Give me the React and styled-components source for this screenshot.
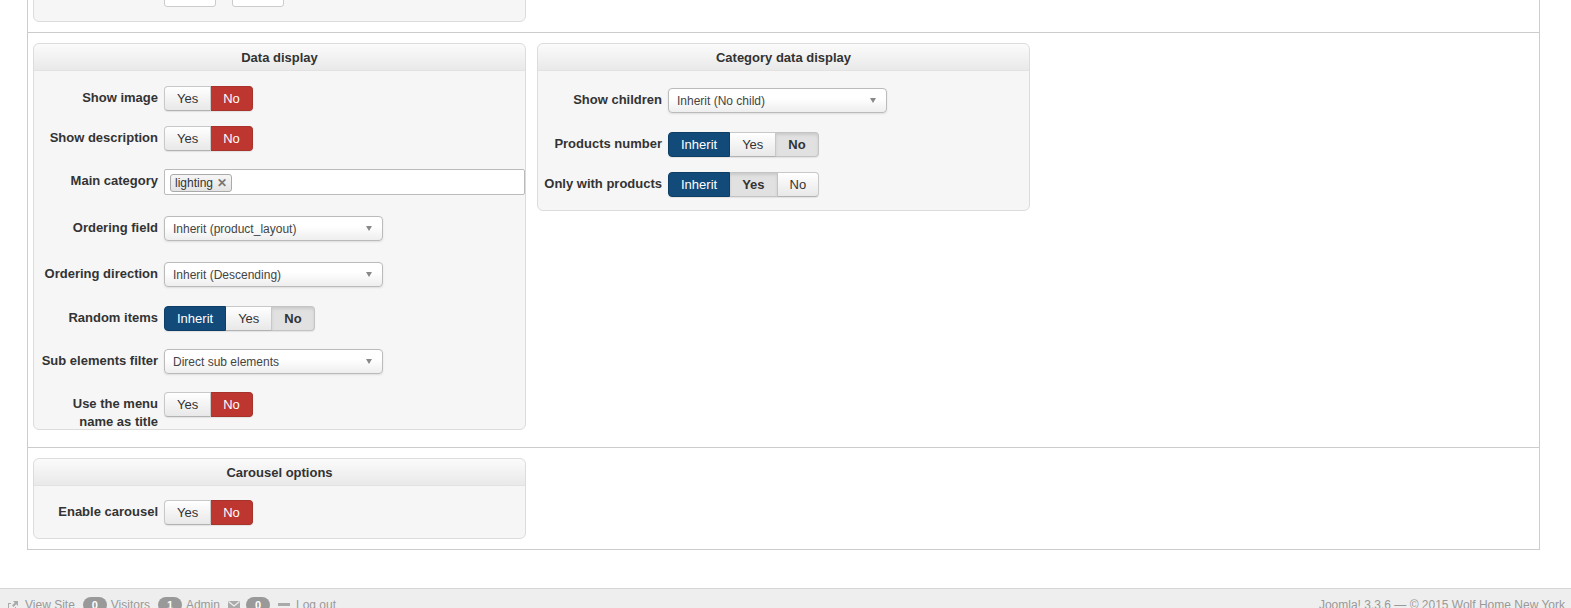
import React from "react";
import styled, { createGlobalStyle, css } from "styled-components";

const GlobalStyle = createGlobalStyle`
  html, body { margin: 0; padding: 0; background: #fff; overflow: hidden; }
  body {
    font-family: "Liberation Sans", Arial, sans-serif;
    font-size: 13px;
    color: #333;
  }
`;

const dataRows = [
  { label: "Show image", type: "toggle", mt: 15, opts: ["Yes", "No"], active: 1, tone: "red" },
  { label: "Show description", type: "toggle", mt: 15, opts: ["Yes", "No"], active: 1, tone: "red" },
  { label: "Main category", type: "tags", mt: 18, tags: ["lighting"] },
  { label: "Ordering field", type: "select", mt: 22, value: "Inherit (product_layout)" },
  { label: "Ordering direction", type: "select", mt: 21, value: "Inherit (Descending)" },
  { label: "Random items", type: "triple", mt: 19, active: 2 },
  { label: "Sub elements filter", type: "select", mt: 18, value: "Direct sub elements" },
  { label: "Use the menu name as title", type: "toggle", mt: 18, opts: ["Yes", "No"], active: 1, tone: "red" },
];

const categoryRows = [
  { label: "Show children", type: "select", mt: 17, value: "Inherit (No child)" },
  { label: "Products number", type: "triple", mt: 19, active: 2 },
  { label: "Only with products", type: "triple", mt: 15, active: 1 },
];

function Toggle({ opts, active, tone }) {
  return (
    <BtnGroup>
      {opts.map((o, i) => (
        <Btn key={o} $state={i === active ? tone : "off"}>
          {o}
        </Btn>
      ))}
    </BtnGroup>
  );
}

// Inherit / Yes / No : Inherit is always shown blue, the selected other is grey
function Triple({ active }) {
  const opts = ["Inherit", "Yes", "No"];
  return (
    <BtnGroup>
      {opts.map((o, i) => (
        <Btn key={o} $state={i === 0 ? "blue" : i === active ? "grey" : "off"}>
          {o}
        </Btn>
      ))}
    </BtnGroup>
  );
}

function Control({ row }) {
  if (row.type === "toggle") return <Toggle opts={row.opts} active={row.active} tone={row.tone} />;
  if (row.type === "triple") return <Triple active={row.active} />;
  if (row.type === "select")
    return (
      <Select>
        <span>{row.value}</span>
        <Caret />
      </Select>
    );
  return (
    <TagInput>
      {row.tags.map((t) => (
        <Tag key={t}>
          {t}
          <TagX>✕</TagX>
        </Tag>
      ))}
    </TagInput>
  );
}

function FieldRows({ rows }) {
  return rows.map((r) => (
    <Row key={r.label} $mt={r.mt}>
      <Label>{r.label}</Label>
      <Control row={r} />
    </Row>
  ));
}

export default function App() {
  return (
    <>
      <GlobalStyle />
      <Page>
        <Section>
          <Panel>
            <Body $pt={8} $pb={16}>
              <Row $mt={0}>
                <Label />
                <SmallInput />
                <SmallInput />
              </Row>
            </Body>
          </Panel>
        </Section>

        <Section $line $pb={17}>
          <Panel>
            <Head>Data display</Head>
            <Body $pb={12}>
              <FieldRows rows={dataRows} />
            </Body>
          </Panel>
          <Panel>
            <Head>Category data display</Head>
            <Body $pb={13}>
              <FieldRows rows={categoryRows} />
            </Body>
          </Panel>
        </Section>

        <Section $line>
          <Panel>
            <Head>Carousel options</Head>
            <Body $pb={13}>
              <Row $mt={14}>
                <Label>Enable carousel</Label>
                <Toggle opts={["Yes", "No"]} active={1} tone="red" />
              </Row>
            </Body>
          </Panel>
        </Section>
      </Page>

      <Footer>
        <FooterLeft>
          <FootItem>
            <svg width="12" height="11" viewBox="0 0 12 11">
              <path d="M1 3h3v1H2v5h6V7h1v3H1z" fill="#aaa" />
              <path d="M6 1h5v5l-1.8-1.8L6.5 7 5 5.5l2.7-2.7z" fill="#aaa" />
            </svg>
            View Site
          </FootItem>
          <FootItem>
            <Badge>0</Badge>
            Visitors
          </FootItem>
          <FootItem>
            <Badge>1</Badge>
            Admin
          </FootItem>
          <FootItem>
            <svg width="12" height="10" viewBox="0 0 12 10">
              <rect x="0" y="1" width="12" height="8" fill="#aaa" />
              <path d="M0.5 1.5L6 6l5.5-4.5" stroke="#eee" strokeWidth="1.2" fill="none" />
            </svg>
            <Badge>0</Badge>
          </FootItem>
          <FootItem>
            <svg width="12" height="10" viewBox="0 0 12 10">
              <rect x="0" y="3" width="12" height="3" fill="#aaa" />
            </svg>
            Log out
          </FootItem>
        </FooterLeft>
        <FooterRight>Joomla! 3.3.6 — © 2015 Wolf Home New York</FooterRight>
      </Footer>
    </>
  );
}

/* ================= styles ================= */

const Page = styled.div`
  margin: -39px 31px 0 27px;
  border: 1px solid #ccc;
  border-top: 0;
`;

const Section = styled.div`
  display: flex;
  align-items: flex-start;
  gap: 11px;
  padding: 10px 5px ${(p) => (p.$pb ? p.$pb : 10)}px;
  ${(p) =>
    p.$line &&
    css`
      border-top: 1px solid #ccc;
    `}
`;

const Panel = styled.div`
  width: 493px;
  flex: none;
  box-sizing: border-box;
  background: #f6f6f6;
  border: 1px solid #dcdcdc;
  border-radius: 6px;
`;

const Head = styled.div`
  height: 26px;
  line-height: 27px;
  text-align: center;
  font-weight: bold;
  font-size: 13px;
  color: #333;
  border-bottom: 1px solid #e2e2e2;
  border-radius: 6px 6px 0 0;
  background: linear-gradient(#fbfbfb, #e9e9e9);
`;

const Body = styled.div`
  padding: ${(p) => p.$pt || 0}px 0 ${(p) => p.$pb || 0}px;
`;

const Row = styled.div`
  display: flex;
  align-items: flex-start;
  height: 25px;
  margin-top: ${(p) => p.$mt}px;
`;

const Label = styled.div`
  flex: none;
  box-sizing: border-box;
  width: 124px;
  margin-right: 6px;
  padding: 3px 0 0 5px;
  text-align: right;
  font-weight: bold;
  font-size: 13px;
  line-height: 18px;
  color: #333;
`;

const SmallInput = styled.div`
  width: 50px;
  height: 25px;
  margin-right: 16px;
  background: #fff;
  border: 1px solid #ccc;
  border-radius: 3px;
`;

const BtnGroup = styled.div`
  display: flex;
  height: 25px;
  border-radius: 4px;
  box-shadow: 0 1px 1px rgba(0, 0, 0, 0.08);
`;

const btnStates = {
  off: css`
    background: linear-gradient(#ffffff, #e8e8e8);
    color: #333;
    border-color: #c8c8c8 #c8c8c8 #b3b3b3;
  `,
  red: css`
    background: #bd362f;
    color: #fff;
    border-color: #a8322c;
  `,
  blue: css`
    background: #124a7a;
    color: #fff;
    border-color: #0e3d66;
  `,
  grey: css`
    background: #e1e1e1;
    color: #333;
    font-weight: bold;
    border-color: #c4c4c4;
    box-shadow: inset 0 2px 3px rgba(0, 0, 0, 0.1);
  `,
};

const Btn = styled.div`
  box-sizing: border-box;
  height: 25px;
  padding: 0 12px;
  line-height: 23px;
  font-size: 13px;
  border: 1px solid;
  border-left-width: 0;
  ${(p) => btnStates[p.$state]}

  &:first-child {
    border-left-width: 1px;
    border-radius: 4px 0 0 4px;
  }
  &:last-child {
    border-radius: 0 4px 4px 0;
  }
`;

const Select = styled.div`
  position: relative;
  box-sizing: border-box;
  width: 219px;
  height: 25px;
  padding: 0 8px;
  line-height: 24px;
  font-size: 12px;
  color: #444;
  background: linear-gradient(#ffffff 40%, #eeeeee);
  border: 1px solid #bbb;
  border-radius: 4px;
  box-shadow: 0 1px 2px rgba(0, 0, 0, 0.1);
`;

const Caret = styled.span`
  position: absolute;
  right: 10px;
  top: 9px;
  width: 0;
  height: 0;
  border-left: 3.5px solid transparent;
  border-right: 3.5px solid transparent;
  border-top: 5px solid #888;
`;

const TagInput = styled.div`
  box-sizing: border-box;
  width: 361px;
  height: 26px;
  padding: 4px 5px;
  background: #fff;
  border: 1px solid #bbb;
  border-radius: 2px;
`;

const Tag = styled.span`
  display: inline-flex;
  align-items: center;
  height: 16px;
  padding: 0 4px;
  font-size: 12px;
  color: #333;
  background: linear-gradient(#f6f6f6, #e4e4e4);
  border: 1px solid #aaa;
  border-radius: 3px;
`;

const TagX = styled.span`
  margin-left: 4px;
  font-size: 12px;
  font-weight: bold;
  color: #777;
`;

const Footer = styled.div`
  display: flex;
  justify-content: space-between;
  margin-top: 38px;
  padding: 8px 6px 0 7px;
  height: 30px;
  background: #eeeeee;
  border-top: 1px solid #d6d6d6;
  font-size: 12px;
  color: #999;
`;

const FooterLeft = styled.div`
  display: flex;
  gap: 8px;
`;

const FootItem = styled.div`
  display: flex;
  align-items: center;
  gap: 4px;
  height: 16px;

  svg { margin-right: 2px; }
`;

const Badge = styled.span`
  display: inline-block;
  min-width: 10px;
  padding: 0 7px;
  height: 16px;
  line-height: 16px;
  border-radius: 8px;
  background: #999;
  color: #fff;
  font-weight: bold;
  font-size: 11px;
  text-align: center;
`;

const FooterRight = styled.div`
  height: 16px;
  line-height: 16px;
`;
